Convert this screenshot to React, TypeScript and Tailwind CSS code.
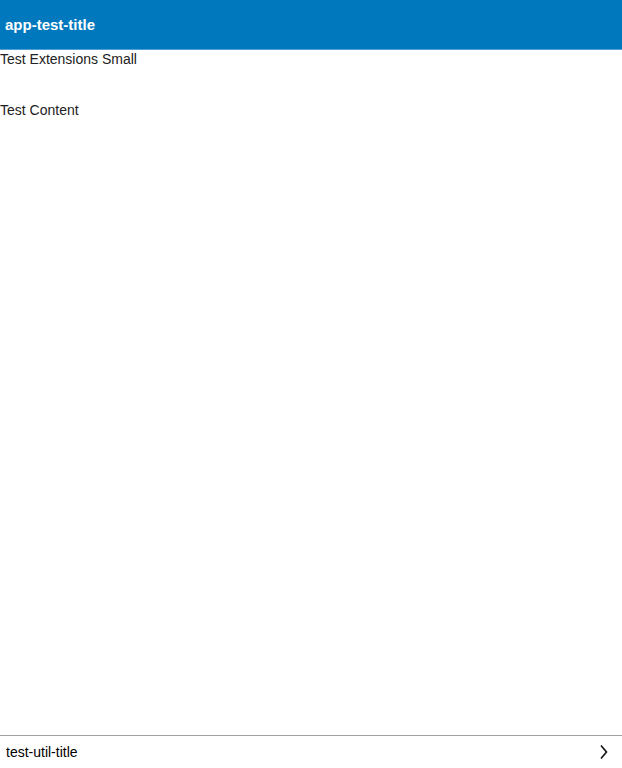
export default function App() {
  return (
    <div className="flex h-screen flex-col bg-white font-['Liberation_Sans',Arial,sans-serif] text-[14px] text-[#222]">
      <header className="flex h-[50px] shrink-0 items-center border-b border-[#4d9fd4] bg-[#0078be] px-[5px] pt-[2px]">
        <span className="text-[15px] font-bold text-white">app-test-title</span>
      </header>
      <main className="flex-1">
        <div className="h-[51px] leading-[18px]">Test Extensions Small</div>
        <div className="leading-[18px]">Test Content</div>
      </main>
      <footer className="flex h-[33px] shrink-0 items-center justify-between border-t border-[#a0a0a0] pl-[6px] pr-[14px]">
        <span className="text-black">test-util-title</span>
        <svg width="9" height="16" viewBox="0 0 9 16" fill="none" stroke="#111" strokeWidth="1.6">
          <path d="M2 1.5 L7.5 8 L2 14.5" />
        </svg>
      </footer>
    </div>
  )
}
